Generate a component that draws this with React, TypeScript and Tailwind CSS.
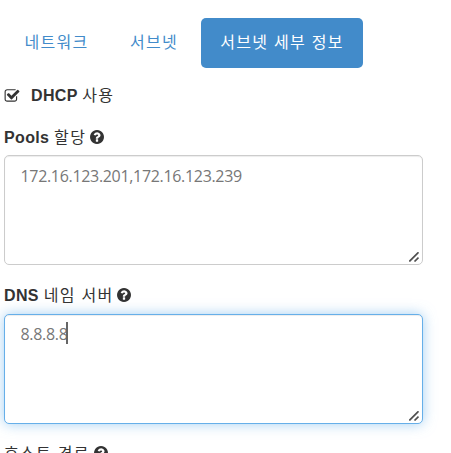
const tabs = [
  { name: "네트워크", className: "w-[105px] text-[#428bca]" },
  { name: "서브넷", className: "mr-0.5 w-[90px] text-[#428bca]" },
  { name: "서브넷 세부 정보", className: "w-[162px] bg-[#428bca] text-white" },
];

function CheckSquareIcon() {
  return (
    <svg viewBox="0 0 1792 1792" className="h-4 w-4 shrink-0" fill="currentColor" aria-hidden="true">
      <path d="M1472 930v318q0 119-84.5 203.5t-203.5 84.5h-832q-119 0-203.5-84.5t-84.5-203.5v-832q0-119 84.5-203.5t203.5-84.5h832q63 0 117 25 15 7 18 23 3 17-9 29l-49 49q-10 10-23 10-3 0-9-2-23-6-45-6h-832q-66 0-113 47t-47 113v832q0 66 47 113t113 47h832q66 0 113-47t47-113v-254q0-13 9-22l64-64q10-10 23-10 6 0 12 3 20 8 20 29zm231-489l-814 814q-24 24-57 24t-57-24l-430-430q-24-24-24-57t24-57l110-110q24-24 57-24t57 24l263 263 647-647q24-24 57-24t57 24l110 110q24 24 24 57t-24 57z" />
    </svg>
  );
}

function QuestionIcon() {
  return (
    <svg viewBox="128 128 1536 1536" className="h-3.5 w-3.5 shrink-0" fill="currentColor" aria-hidden="true">
      <path d="M1024 1376v-192q0-14-9-23t-23-9h-192q-14 0-23 9t-9 23v192q0 14 9 23t23 9h192q14 0 23-9t9-23zm256-672q0-88-55.5-163t-138.5-116-170-41q-243 0-371 213-15 24 8 42l132 100q7 6 19 6 16 0 25-12 53-68 86-92 34-24 86-24 48 0 85.5 26t37.5 59q0 38-20 61t-68 45q-63 28-115.5 86.5t-52.5 125.5v36q0 14 9 23t23 9h192q14 0 23-9t9-23q0-19 21.5-49.5t54.5-49.5q32-18 49-28.5t46-35 44.5-48 28-60.5 12.5-81zm384 192q0 209-103 385.5t-279.5 279.5-385.5 103-385.5-103-279.5-279.5-103-385.5 103-385.5 279.5-279.5 385.5-103 385.5 103 279.5 279.5 103 385.5z" />
    </svg>
  );
}

// Latin part is bold, the Korean part keeps a lighter weight
function Label({ latin, korean }: { latin?: string; korean: string }) {
  return (
    <span className="flex items-center whitespace-pre">
      {latin && <b className="font-bold tracking-[0.35px]">{latin} </b>}
      <span className="font-normal tracking-[1.3px]">{korean}</span>
    </span>
  );
}

function Field({ latin, korean, value, active }: { latin?: string; korean: string; value: string; active?: boolean }) {
  return (
    <div className={active ? "pb-[18px]" : "pb-[19px]"}>
      <label className={`flex items-start gap-1 ${active ? "h-[30px]" : "h-[29px]"}`}>
        <Label latin={latin} korean={korean} />
        <span className="pt-1">
          <QuestionIcon />
        </span>
      </label>
      <div className="relative h-[110px] w-[419px]">
        <textarea
          defaultValue={value}
          spellCheck={false}
          className={`block h-full w-full resize-none rounded-[5px] border bg-white px-[15.5px] font-['Open_Sans','Noto_Sans_CJK_KR',sans-serif] text-base leading-6 tracking-[-0.32px] text-[#777] outline-none ${
            active
              ? "border-[#66afe9] pt-[7px] shadow-[inset_0_1px_1px_rgba(0,0,0,0.075),0_0_13px_rgba(102,175,233,0.6)]"
              : "border-[#ccc] pt-2 shadow-[inset_0_1px_1px_rgba(0,0,0,0.075)]"
          }`}
        />
        {active && <span className="absolute left-[62px] top-2 h-[22px] w-[2px] bg-[#666]" />}
        <svg
          viewBox="0 0 10 10"
          className="absolute bottom-[3px] right-[4px] h-2.5 w-2.5"
          fill="none"
          stroke="#505050"
          strokeWidth="1.7"
          aria-hidden="true"
        >
          <path d="M0.3 9.5L9.5 0.3M5.5 9.5L9.5 5.5" />
        </svg>
      </div>
    </div>
  );
}

export default function App() {
  return (
    <div className="h-[453px] w-[451px] overflow-hidden bg-white pl-1 pt-[18px] font-['Liberation_Sans','Noto_Sans_CJK_KR',sans-serif] text-base leading-6 text-[#333]">
      <nav className="flex">
        {tabs.map((tab) => (
          <a
            key={tab.name}
            className={`flex h-[50px] items-center justify-center whitespace-nowrap rounded-[5px] tracking-[1.3px] ${tab.className}`}
          >
            {tab.name}
          </a>
        ))}
      </nav>
      <div className="mt-4 flex h-6 items-center gap-[11px]">
        <CheckSquareIcon />
        <Label latin="DHCP" korean="사용" />
      </div>
      <div className="mt-[18px]">
        <Field latin="Pools" korean="할당" value="172.16.123.201,172.16.123.239" />
        <Field latin="DNS" korean="네임 서버" value="8.8.8.8" active />
        <Field korean="호스트 경로" value="" />
      </div>
    </div>
  );
}
